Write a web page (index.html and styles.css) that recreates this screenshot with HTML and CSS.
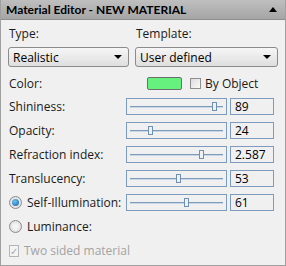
FILE: index.html
```html
<!DOCTYPE html>
<html lang="en">
<head>
    <meta charset="UTF-8">
    <title>Material Editor</title>
    <link rel="stylesheet" href="styles.css">
</head>
<body>
    <div id="panel">
        <div class="title">
            <span>Material Editor - NEW MATERIAL</span>
            <span class="collapse"></span>
        </div>
        <div class="body">
            <div class="pickers">
                <div class="pick pickType">
                    <label>Type:</label>
                    <div class="combo">Realistic<span class="arrow"></span></div>
                </div>
                <div class="pick pickTemplate">
                    <label>Template:</label>
                    <div class="combo">User defined<span class="arrow"></span></div>
                </div>
            </div>

            <div class="colorRow">
                <span class="label">Color:</span>
                <span class="swatch"></span>
                <span class="check"></span>
                <span>By Object</span>
            </div>

            <div class="param">
                <span class="label">Shininess:</span>
                <div class="slider"><span class="thumb" style="left: 89%"></span></div>
                <div class="value">89</div>
            </div>
            <div class="param">
                <span class="label">Opacity:</span>
                <div class="slider"><span class="thumb" style="left: 24%"></span></div>
                <div class="value">24</div>
            </div>
            <div class="param">
                <span class="label">Refraction index:</span>
                <div class="slider"><span class="thumb" style="left: 76%"></span></div>
                <div class="value">2.587</div>
            </div>
            <div class="param">
                <span class="label">Translucency:</span>
                <div class="slider"><span class="thumb" style="left: 53%"></span></div>
                <div class="value">53</div>
            </div>
            <div class="param">
                <span class="label"><span class="radio on"></span>Self-Illumination:</span>
                <div class="slider"><span class="thumb" style="left: 61%"></span></div>
                <div class="value">61</div>
            </div>
            <div class="param">
                <span class="label"><span class="radio"></span>Luminance:</span>
            </div>
            <div class="param disabled">
                <span class="label"><span class="check checked">&#x2713;</span>Two sided material</span>
            </div>
        </div>
    </div>
</body>
</html>
```

FILE: styles.css
```css
body {
    margin: 0;
    font-family: "Open Sans", "Noto Sans", sans-serif;
    font-size: 12px;
    color: #1a1a1a;
    background: #f0f0f0;
}
#panel {
    width: 286px;
    height: 266px;
    box-sizing: border-box;
    border: 1px solid #a0a0a0;
    border-top: none;
    background: #f0f0f0;
}
.title {
    height: 19px;
    display: flex;
    align-items: center;
    justify-content: space-between;
    padding: 0 8px 0 5px;
    background: linear-gradient(#bfbfbf, #a5a5a5);
    border-bottom: 1px solid #8e8e8e;
    font-family: Lato, "Open Sans", sans-serif;
    font-weight: bold;
    font-size: 12px;
    color: #000;
}
.collapse {
    width: 0;
    height: 0;
    border-left: 4px solid transparent;
    border-right: 4px solid transparent;
    border-bottom: 5px solid #000;
}
.body {
    padding: 6px 0 0 7px;
}
.pickers {
    display: flex;
    gap: 6px;
}
.pick {
    display: flex;
    flex-direction: column;
    gap: 5px;
}
.pick label {
    line-height: 16px;
    padding-left: 1px;
}
.pickType { width: 121px; }
.pickTemplate { width: 143px; }
.combo {
    height: 20px;
    box-sizing: border-box;
    border: 1px solid #8b8b8b;
    border-radius: 3px;
    background: linear-gradient(#f6f6f6, #dedede);
    display: flex;
    align-items: center;
    justify-content: space-between;
    padding: 0 6px 0 4px;
    color: #000;
}
.arrow {
    width: 0;
    height: 0;
    border-left: 4px solid transparent;
    border-right: 4px solid transparent;
    border-top: 4px solid #000;
}
.colorRow {
    display: flex;
    align-items: center;
    height: 17px;
    margin-top: 8px;
}
.colorRow .label {
    width: 138px;
    padding-left: 1px;
}
.swatch {
    width: 35px;
    height: 13px;
    box-sizing: border-box;
    border: 1px solid #6e6e6e;
    border-radius: 2px;
    background: #66f17f;
    margin-right: 8px;
}
.check {
    width: 11px;
    height: 11px;
    box-sizing: border-box;
    border: 1px solid #8f8f8f;
    background: linear-gradient(135deg, #dcdcdc, #fafafa);
    margin-right: 4px;
    display: inline-flex;
    align-items: center;
    justify-content: center;
    font-size: 10px;
    line-height: 1;
}
.param {
    display: grid;
    grid-template-columns: 115px 101px 44px;
    column-gap: 3px;
    align-items: center;
    height: 17px;
    margin-top: 7px;
}
.colorRow + .param {
    margin-top: 6px;
}
.label {
    display: flex;
    align-items: center;
    padding-left: 1px;
    white-space: nowrap;
}
.slider {
    position: relative;
    height: 17px;
    box-sizing: border-box;
    border: 1px solid #7d9bbd;
}
.slider::before {
    content: "";
    position: absolute;
    left: 3px;
    right: 3px;
    top: 7px;
    height: 1px;
    background: #7d9bbd;
    border-bottom: 1px solid #c9d6e4;
}
.thumb {
    position: absolute;
    top: 3px;
    width: 5px;
    height: 9px;
    margin-left: -3px;
    box-sizing: border-box;
    border: 1px solid #6f8fb3;
    background: #eef2f6;
}
.value {
    height: 17px;
    box-sizing: border-box;
    border: 1px solid #7d9bbd;
    padding-left: 4px;
    line-height: 15px;
    color: #000;
}
.radio {
    width: 13px;
    height: 13px;
    box-sizing: border-box;
    border-radius: 50%;
    border: 1px solid #8c8c8c;
    background: radial-gradient(circle, #f4f4f4 30%, #d0d0d0 100%);
    margin-right: 5px;
    position: relative;
}
.radio.on::after {
    content: "";
    position: absolute;
    left: 2px;
    top: 2px;
    width: 7px;
    height: 7px;
    border-radius: 50%;
    background: radial-gradient(circle at 40% 35%, #6fc2f5, #0f5fa8);
}
.disabled {
    color: #a3a3a3;
}
.check.checked {
    width: 12px;
    height: 12px;
    color: #a8a8a8;
    border-color: #b5b5b5;
    background: #f4f4f4;
    margin-right: 5px;
}
```
